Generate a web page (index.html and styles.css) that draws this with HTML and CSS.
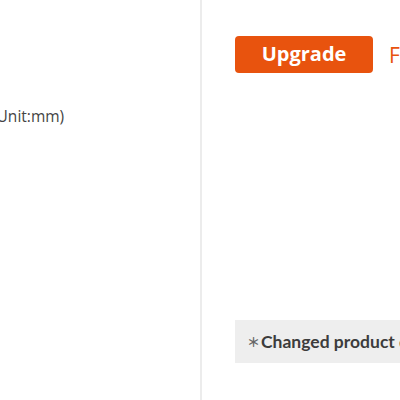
FILE: index.html
```html
<!DOCTYPE html>
<html lang="en">
<head>
    <meta charset="utf-8">
    <title>Product spec</title>
    <link rel="stylesheet" href="styles.css">
</head>
<body>
<div class="page">
    <div class="left">
        <p class="unit">(Unit:mm)</p>
    </div>
    <div class="right">
        <div class="top">
            <button class="upgrade">Upgrade</button>
            <span class="free">Free</span>
        </div>
        <div class="note"><span class="star">＊</span>Changed product details</div>
    </div>
</div>
</body>
</html>
```

FILE: styles.css
```css
body {
    margin: 0;
    background: #fff;
    font-family: "Open Sans", "Liberation Sans", sans-serif;
    color: #444;
    overflow: hidden;
}
.page {
    display: flex;
    height: 400px;
}
.left {
    width: 200px;
    flex: none;
    border-right: 2px solid #ececec;
}
.unit {
    margin: 104px 0 0 -8px;
    font-size: 15.5px;
    line-height: 24px;
    white-space: nowrap;
}
.right {
    flex: 1;
    padding-left: 33px;
    display: flex;
    flex-direction: column;
    white-space: nowrap;
    min-width: 0;
}
.top {
    display: flex;
    align-items: center;
    margin-top: 36px;
}
.upgrade {
    flex: none;
    width: 138px;
    height: 37px;
    border: none;
    border-radius: 4px;
    background: #e8530e;
    color: #fff;
    font-family: "Open Sans", sans-serif;
    font-weight: 700;
    font-size: 20px;
    padding: 0 0 2px;
    cursor: pointer;
}
.free {
    margin-left: 16px;
    color: #e8530e;
    font-size: 21px;
}
.note {
    margin-top: 247px;
    height: 43px;
    background: #eeeeee;
    padding-left: 12px;
    display: flex;
    align-items: center;
    font-family: Lato, "Open Sans", sans-serif;
    font-size: 17.5px;
    font-weight: 700;
    color: #3c3c3c;
}
.star {
    font-size: 13px;
    color: #666;
    margin-right: 1px;
    font-family: "Noto Sans CJK JP", sans-serif;
}
```
